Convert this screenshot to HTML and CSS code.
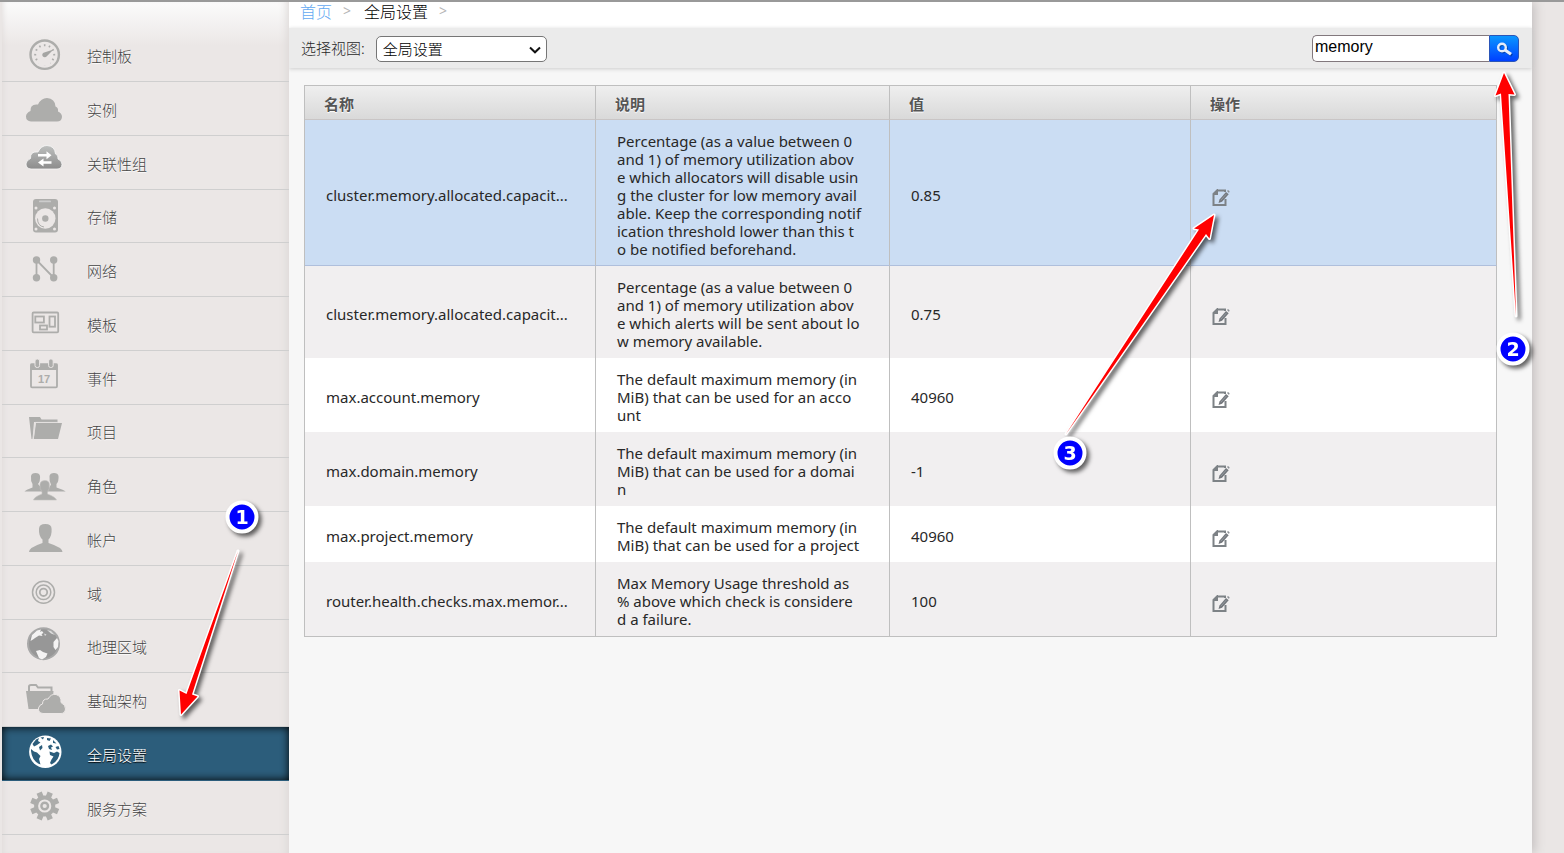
FILE: index.html
```html
<!DOCTYPE html>
<html lang="zh-CN">
<head>
<meta charset="utf-8">
<title>全局设置</title>
<link rel="stylesheet" href="styles.css">
</head>
<body>
<svg class="defs" width="0" height="0" aria-hidden="true">
  <defs>
    <linearGradient id="metal" x1="0" y1="0" x2="0" y2="1"><stop offset="0" stop-color="#bdbfbe"/><stop offset="1" stop-color="#8c8c8c"/></linearGradient>
    <symbol id="edit" viewBox="0 0 18 18">
      <path d="M5 1.500H13V3M13.500 10V16H1.500V5L5 1.500V5H1.500" fill="none" stroke="#7d8286" stroke-width="2"/>
      <path d="M6.500 14L7.500 10.500L14 3L16.700 5.200L10 12.800Z" fill="#73777c"/>
      <path d="M15 2L16 1L17.600 2.300L17 4Z" fill="#8a8f94"/>
      <path d="M8.800 11.200L14.600 4.800" stroke="#a4aab1" stroke-width=".7"/>
    </symbol>
  </defs>
</svg>
<div class="page">
  <nav class="sidebar">
    <ul>
      <li><a href="#"><svg viewBox="0 0 48 53"><circle cx="22.700" cy="26.700" r="14.200" fill="none" stroke="#adadab" stroke-width="2.400"/><circle cx="22.700" cy="26.700" r="9.500" fill="none" stroke="#adadab" stroke-width="2" stroke-dasharray="1.600 3.400" stroke-dashoffset="0.800" pathLength="60" transform="rotate(150 22.700 26.700)"/><path d="M17 32H28V37.500H17Z" fill="#ebe7e6"/><path d="M31.500 21.500L24.800 28.300A2.500 2.500 0 1 1 21.500 24.700Z" fill="#a5a5a3"/></svg><span>控制板</span></a></li>
      <li><a href="#"><svg viewBox="0 0 48 53"><path d="M9 39.500Q4 39 4 34.500Q4 31 8.500 29Q8 21.500 16 22.500Q19 16 25 16Q33 16.500 33.500 24.500Q36.500 25.500 36 29.500Q40 31 40 35Q39.500 39.500 35 39.500Z" fill="#adadab"/></svg><span>实例</span></a></li>
      <li><a href="#"><svg viewBox="0 0 48 53"><path d="M9 33Q4 32.500 4 28Q4 24.500 8.500 22.500Q8 15 16 16Q19 9.500 25 9.500Q33 10 33.500 18Q36.500 19 36 23Q40 24.500 40 28.500Q39.500 33 35 33Z" fill="url(#metal)" stroke="#f8f7f7" stroke-width=".8"/><path d="M16 18H24.500V15.300L29.500 19.300L24.500 23.300V20.500H16ZM29.500 25.200H21.500V22.500L16 26.500L21.500 30.500V27.700H29.500Z" fill="#fff"/></svg><span>关联性组</span></a></li>
      <li><a href="#"><svg viewBox="0 0 48 53"><rect x="11" y="9" width="25" height="33.500" rx="3" fill="#adadab"/><rect x="17" y="10.500" width="12" height="1.800" rx=".9" fill="#ccc"/><circle cx="23.300" cy="28.500" r="10.200" fill="#ebe7e6"/><circle cx="23.300" cy="28.500" r="3.200" fill="#adadab"/><path d="M15.500 28.500Q15.500 36 22 37" fill="none" stroke="#adadab"/><g fill="#ebe7e6"><circle cx="14" cy="18" r="1.500"/><circle cx="32.500" cy="18" r="1.500"/><circle cx="14" cy="39" r="1.500"/><circle cx="32.500" cy="39" r="1.500"/></g></svg><span>存储</span></a></li>
      <li><a href="#"><svg viewBox="0 0 48 53"><path d="M14.500 34.700V17L31.700 34.700V17" fill="none" stroke="#adadab" stroke-width="1.800"/><g fill="#adadab"><circle cx="14.500" cy="17" r="3.700"/><circle cx="31.700" cy="17" r="3.700"/><circle cx="14.500" cy="34.700" r="3.700"/><circle cx="31.700" cy="34.700" r="3.700"/></g></svg><span>网络</span></a></li>
      <li><a href="#"><svg viewBox="0 0 48 53"><g fill="none" stroke="#adadab" stroke-width="1.800"><rect x="10.600" y="15.500" width="25.600" height="19.800" rx="1"/><rect x="13.300" y="19.500" width="8.600" height="6"/><rect x="27.500" y="19.500" width="5.500" height="10.200"/><rect x="18" y="28.500" width="7" height="4"/></g></svg><span>模板</span></a></li>
      <li><a href="#"><svg viewBox="0 0 48 53"><rect x="9" y="13.500" width="26" height="22.800" rx="1" fill="none" stroke="#adadab" stroke-width="1.800"/><path d="M8.500 12.500H35.500V19H8.500Z" fill="#adadab"/><g fill="#adadab" stroke="#ebe7e6"><rect x="13" y="8" width="4.600" height="8.500" rx="2"/><rect x="26.600" y="8" width="4.600" height="8.500" rx="2"/></g><text x="22" y="32" class="calendar-day">17</text></svg><span>事件</span></a></li>
      <li><a href="#"><svg viewBox="0 0 48 53"><path d="M7 12H18L19.500 14.500H35.500V17H12L10.500 34H9.500Z" fill="#adadab"/><path d="M14 18H40L36 34H11.800Z" fill="#adadab"/><path d="M11.200 34L13.200 17.400H36" fill="none" stroke="#e0dddc" stroke-width=".8"/></svg><span>项目</span></a></li>
      <li><a href="#"><svg viewBox="0 0 48 53"><g fill="#adadab"><path d="M9 18Q9.500 15 13.500 15T18 18Q18.500 23 16 26L19.500 30L24 33.500H2.500Q3.500 32 10.500 29.500V26Q8.500 23 9 18Z"/><path d="M27.500 18Q28 15 32 15T36.500 18Q37 23 34.500 26V29.500Q42 32 43.700 33.500H22L27 30L29 26.500Q27 23 27.500 18Z"/></g><path d="M18 26Q18.500 22.500 22.800 22.500T27.300 26Q28 31 25.500 34V36Q33.500 39 34.500 42H11.500Q12 39 20 36V34Q17.500 31 18 26Z" fill="#adadab" stroke="#c4c2c1" stroke-width=".6"/></svg><span>角色</span></a></li>
      <li><a href="#"><svg viewBox="0 0 48 53"><path d="M17 17Q17 12 23.300 12T29.600 17Q30 24 26.500 27.500V31Q40.500 35.500 40.500 40H7Q7 35.500 20.500 31V27.500Q16.500 24 17 17Z" fill="#adadab"/></svg><span>帐户</span></a></li>
      <li><a href="#"><svg viewBox="0 0 48 53"><g fill="none" stroke="#adadab" stroke-width="1.500"><circle cx="21.500" cy="26.300" r="11"/><circle cx="21.500" cy="26.300" r="7.300"/><circle cx="21.500" cy="26.300" r="3.700" stroke-width="1.800"/></g></svg><span>域</span></a></li>
      <li><a href="#"><svg viewBox="0 0 48 53"><circle cx="21.500" cy="23.700" r="15.500" fill="#979797" stroke="#a8a8a8" stroke-width="2"/><path d="M8.500 21L10 15L15 10.500L19 9.500L18 12L20 11L21.500 13L19.500 14L20.500 16L17 15.500L13 18L11 19.500ZM14 31L18 30L21 32L25.500 33.500L24 37L20 39.500L17 38ZM31.500 22L35 18L36.500 21L36 27L33.500 30L31.500 27Z" fill="#f4f3f3"/><path d="M25 10L29 11L33 15L29 13.500ZM22 13.500L24.500 14.500L23 16Z" fill="#dcdcdc"/></svg><span>地理区域</span></a></li>
      <li><a href="#"><svg viewBox="0 0 48 53"><path d="M7 18V13.500Q7 12 9 12H14L16 14.500H29.500V18" fill="none" stroke="#adadab" stroke-width="2"/><path d="M4 18H31.500L30 36H6.500Z" fill="#adadab"/><path d="M21 40.500Q16 40 16.500 35Q17.500 31.500 20.500 31Q20.500 25.500 26 26Q29 20.500 34 21.500Q39.500 23 39 29.500Q43.800 32 43.500 36Q43 40.500 39 40.500Z" fill="#adadab" stroke="#ebe7e6"/></svg><span>基础架构</span></a></li>
      <li class="active"><a href="#" aria-current="page"><svg viewBox="0 0 48 53"><circle cx="23.300" cy="24.700" r="16.200" fill="#fff"/><path d="M9 22L12 24.500L15 25.500L18.500 29L17 32L18.500 37.500Q10 34.500 9 24ZM10.500 17L14 12.500L17 11L16 14L18.500 15.500L15 18L12 19.500ZM18.500 10.500L22 10L21 12.500ZM25 11L29 11.500L27.500 14L25 13ZM31 13L34.500 16.500L31 16ZM17 20L20 18L20.500 21L18 23.500ZM26 19L29 17.500L31 19.500L29 20.500L30 23L27 22ZM27.500 24.500L32 26L35 24.500L37.500 26Q37 33.500 29.500 37.500L28 36L29.500 32.500L31.500 29.500L28 28ZM33.500 20L36.500 19L37.500 22L35 22.500Z" fill="#2c5d7b"/></svg><span>全局设置</span></a></li>
      <li><a href="#"><svg viewBox="0 0 48 53"><circle cx="22.700" cy="25" r="8.600" fill="none" stroke="#adadab" stroke-width="4"/><circle cx="22.700" cy="25" r="3.300" fill="none" stroke="#adadab" stroke-width="2.400"/><g stroke="#adadab" stroke-width="5.600"><path d="M22.700 10.500V15.500M22.700 34.500V39.500M8.200 25H13.200M32.200 25H37.200" transform="rotate(22.500 22.700 25)"/><path d="M22.700 10.500V15.500M22.700 34.500V39.500M8.200 25H13.200M32.200 25H37.200" transform="rotate(67.500 22.700 25)"/></g></svg><span>服务方案</span></a></li>
    </ul>
  </nav>
  <main class="content">
    <nav class="breadcrumb"><a href="#">首页</a><i>&gt;</i><span>全局设置</span><i>&gt;</i></nav>
    <form class="toolbar">
      <label for="view">选择视图:</label>
      <div class="select-box">
        <select id="view"><option>全局设置</option></select>
        <svg viewBox="0 0 12 8"><path d="M1 1.500L6 6.300L11 1.500" fill="none" stroke="#111" stroke-width="2"/></svg>
      </div>
      <div class="search">
        <input type="text" value="memory" aria-label="搜索">
        <button type="button" aria-label="搜索"><svg viewBox="0 0 18 16"><g opacity=".35" transform="translate(1 1)"><circle cx="6" cy="5.500" r="3.800" fill="none" stroke="#012" stroke-width="2.400"/><path d="M9 8L15 12.500" stroke="#012" stroke-width="3.200"/></g><circle cx="6" cy="5.500" r="3.800" fill="none" stroke="#e6edfb" stroke-width="2.400"/><path d="M9 8L15 12.300" stroke="#e6edfb" stroke-width="3.200"/></svg></button>
      </div>
    </form>
    <table>
      <colgroup><col class="c1"><col class="c2"><col class="c3"><col class="c4"></colgroup>
      <thead><tr><th>名称</th><th>说明</th><th>值</th><th>操作</th></tr></thead>
      <tbody>
        <tr class="selected"><td>cluster.memory.allocated.capacit...</td><td>Percentage (as a value between 0<br>and 1) of memory utilization abov<br>e which allocators will disable usin<br>g the cluster for low memory avail<br>able. Keep the corresponding notif<br>ication threshold lower than this t<br>o be notified beforehand.</td><td>0.85</td><td><button type="button" class="edit" aria-label="编辑"><svg><use href="#edit"/></svg></button></td></tr>
        <tr><td>cluster.memory.allocated.capacit...</td><td>Percentage (as a value between 0<br>and 1) of memory utilization abov<br>e which alerts will be sent about lo<br>w memory available.</td><td>0.75</td><td><button type="button" class="edit" aria-label="编辑"><svg><use href="#edit"/></svg></button></td></tr>
        <tr><td>max.account.memory</td><td>The default maximum memory (in<br>MiB) that can be used for an acco<br>unt</td><td>40960</td><td><button type="button" class="edit" aria-label="编辑"><svg><use href="#edit"/></svg></button></td></tr>
        <tr><td>max.domain.memory</td><td>The default maximum memory (in<br>MiB) that can be used for a domai<br>n</td><td>-1</td><td><button type="button" class="edit" aria-label="编辑"><svg><use href="#edit"/></svg></button></td></tr>
        <tr><td>max.project.memory</td><td>The default maximum memory (in<br>MiB) that can be used for a project</td><td>40960</td><td><button type="button" class="edit" aria-label="编辑"><svg><use href="#edit"/></svg></button></td></tr>
        <tr><td>router.health.checks.max.memor...</td><td>Max Memory Usage threshold as<br>% above which check is considere<br>d a failure.</td><td>100</td><td><button type="button" class="edit" aria-label="编辑"><svg><use href="#edit"/></svg></button></td></tr>
      </tbody>
    </table>
  </main>
</div>
<svg class="annotations" width="1564" height="853" viewBox="0 0 1564 853">
  <g class="arrow">
    <path d="M238 551L192 694.500L197.500 696.500L181 714.500L179.500 690.500L186.500 694Z"/>
    <path d="M1516 316L1508.500 94L1514.500 94.500L1504 73L1495.500 95.500L1501 93.500Z"/>
    <path d="M1066 434L1206 234L1209.500 238.500L1214 215L1194 228.500L1199 229.500Z"/>
  </g>
  <g class="badge"><circle cx="242" cy="517" r="14.500"/><circle cx="1513" cy="349" r="14.500"/><circle cx="1070" cy="453" r="14.500"/></g>
  <g class="digit"><text x="242" y="524">1</text><text x="1513" y="356">2</text><text x="1070" y="460">3</text></g>
</svg>
</body>
</html>
```
FILE: styles.css
```css
* { box-sizing: border-box; }
body {
  margin: 0;
  min-height: 100vh;
  background: #eae6e5;
  color: #282828;
  font: 15px/18px "Noto Sans", "Noto Sans CJK SC", sans-serif;
  overflow: hidden;
}
.defs { position: absolute; }
.page {
  display: flex;
  min-height: 100vh;
  border-top: 2px solid #999;
  padding: 0 32px 0 2px;
}
a { text-decoration: none; color: inherit; }

.sidebar {
  flex: 0 0 287px;
  padding-top: 26px;
  background: linear-gradient(#fbfbfb, #ebe7e6 44px);
  box-shadow: inset -8px 0 8px -6px #dcd8d7, inset 6px 0 6px -6px #dcd8d7;
}
.sidebar ul { margin: 0; padding: 0; list-style: none; }
.sidebar li { height: 54px; border-bottom: 1px solid #cfcfcf; }
.sidebar li:nth-child(4n) { height: 53px; }
.sidebar a {
  display: flex;
  align-items: center;
  height: 100%;
  padding-left: 20px;
  gap: 17px;
  color: #444;
  font-family: "Noto Sans CJK SC", sans-serif;
  font-weight: 300;
  text-shadow: 0 1px 1px #fff;
}
.sidebar svg { width: 48px; height: 53px; flex: none; }
.sidebar span { padding-top: 2px; }
.sidebar .active { border-bottom-color: #2c5d7b; background: #2c5d7b; box-shadow: inset 0 0 8px #000; }
.sidebar .active a { color: #fff; text-shadow: 0 1px 1px #000; }
.calendar-day { font: bold 11px "Liberation Sans", sans-serif; fill: #adadab; text-anchor: middle; text-shadow: none; }

.content { flex: 1; min-width: 0; background: #f7f7f7; box-shadow: 3px 0 10px #c4c0c0; clip-path: inset(0 -20px 0 0); }
.breadcrumb {
  display: flex;
  align-items: center;
  height: 26px;
  padding: 0 0 8px 11px;
  background: #fff;
  color: #000;
  font: 300 16px/18px "Noto Sans CJK SC", sans-serif;
}
.breadcrumb a { color: #63a9f1; }
.breadcrumb i { width: 32px; padding-left: 11px; color: #b5b5b5; font: 14px/18px "Noto Sans", sans-serif; }
.toolbar {
  display: flex;
  align-items: center;
  height: 40px;
  padding: 0 13px 0 12px;
  background: #ebebeb;
  box-shadow: 0 1px 4px #ccc;
  font-family: "Noto Sans CJK SC", sans-serif;
  font-weight: 300;
}
.select-box { position: relative; width: 171px; margin: 1px 0 0 11px; }
.select-box svg { position: absolute; right: 6px; top: 10px; width: 12px; height: 8px; pointer-events: none; }
select {
  display: block;
  width: 100%;
  height: 26px;
  padding: 0 6px;
  appearance: none;
  border: 1px solid #767676;
  border-radius: 5px;
  background: #fff;
  color: #000;
  font: 300 15px/22px "Noto Sans CJK SC", sans-serif;
}
.search { display: flex; margin-left: auto; }
.search input {
  width: 177px;
  height: 27px;
  padding: 0 2px 3px;
  border: 1px solid #82787d;
  border-right: 0;
  border-radius: 5px 0 0 5px;
  background: #fff;
  color: #000;
  font: 16px "Liberation Sans", sans-serif;
}
.search button {
  width: 30px;
  height: 27px;
  padding: 6px 6px 4px;
  border: 1px solid #2a55b8;
  border-radius: 0 5px 5px 0;
  background: linear-gradient(#0a96ff, #0040ff);
}
.search svg { display: block; width: 18px; height: 16px; }

table {
  width: calc(100% - 50px);
  margin: 17px 35px 0 15px;
  table-layout: fixed;
  border-collapse: separate;
  border-spacing: 0;
  border: 1px solid #bfbfbf;
  border-width: 1px 0 1px 1px;
}
.c1 { width: 291px; }
.c2 { width: 294px; }
.c3 { width: 301px; }
th, td { border-right: 1px solid #bfbfbf; text-align: left; }
th {
  height: 34px;
  padding: 3px 0 0 19px;
  border-bottom: 1px solid #c9c5c5;
  background: linear-gradient(#efefef, #d9d9d9);
  color: #555;
  font: bold 15px/18px "Noto Sans CJK SC", sans-serif;
  text-shadow: 0 1px 1px #fff;
}
td { padding: 12px 0 8px 21px; background: #fff; vertical-align: middle; white-space: nowrap; }
tr:nth-child(even) td { background: #f1eff0; }
.selected td { padding-bottom: 7px; border-bottom: 1px solid #afbfdc; background: #cbddf3; }
.edit { display: block; width: 18px; height: 18px; margin-top: 6px; padding: 0; border: 0; background: none; }
.edit svg { display: block; width: 18px; height: 18px; }

.annotations { position: absolute; top: 0; left: 0; pointer-events: none; filter: drop-shadow(3px 3px 2px rgba(0, 0, 0, .6)); }
.arrow { fill: #f00; stroke: #fff; stroke-width: 3px; stroke-linejoin: round; paint-order: stroke; }
.badge { fill: #00f; stroke: #fff; stroke-width: 4px; }
.digit { fill: #fff; font: bold 19px "DejaVu Sans", sans-serif; text-anchor: middle; }
```
